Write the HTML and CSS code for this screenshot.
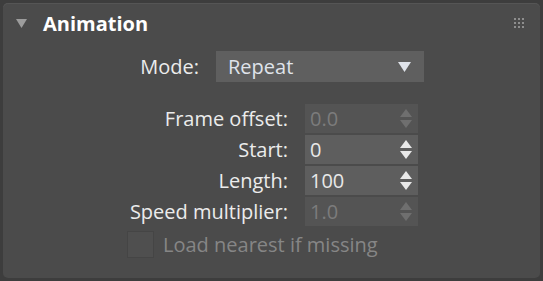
FILE: index.html
```html
<!DOCTYPE html>
<html lang="en">
<head>
  <meta charset="UTF-8" />
  <meta name="viewport" content="width=device-width, initial-scale=1.0"/>
  <title>Animation Rollout</title>
  <link rel="stylesheet" href="styles.css">
</head>
<body>
  <div class="rollout">
    <div class="rollout-header">
      <svg class="rollout-toggle" width="11" height="9" viewBox="0 0 11 9">
        <polygon points="0,0 11,0 5.5,9" fill="currentColor"></polygon>
      </svg>
      <h3>Animation</h3>
      <div class="grip">
        <span></span><span></span><span></span>
        <span></span><span></span><span></span>
        <span></span><span></span><span></span>
      </div>
    </div>

    <div class="mode-row">
      <label class="field-label">Mode:</label>
      <div class="dropdown">
        <span>Repeat</span>
        <svg width="13" height="10" viewBox="0 0 13 10">
          <polygon points="0,0 13,0 6.5,10" fill="currentColor"></polygon>
        </svg>
      </div>
    </div>

    <div class="spinner-grid">
      <label class="field-label">Frame offset:</label>
      <div class="spinner disabled">
        <span>0.0</span>
        <svg class="spin-arrows" width="12" height="20" viewBox="0 0 12 20">
          <polygon points="6,0 12,8 0,8" fill="currentColor"></polygon>
          <polygon points="0,11 12,11 6,19" fill="currentColor"></polygon>
        </svg>
      </div>

      <label class="field-label">Start:</label>
      <div class="spinner">
        <span>0</span>
        <svg class="spin-arrows" width="12" height="20" viewBox="0 0 12 20">
          <polygon points="6,0 12,8 0,8" fill="currentColor"></polygon>
          <polygon points="0,11 12,11 6,19" fill="currentColor"></polygon>
        </svg>
      </div>

      <label class="field-label">Length:</label>
      <div class="spinner">
        <span>100</span>
        <svg class="spin-arrows" width="12" height="20" viewBox="0 0 12 20">
          <polygon points="6,0 12,8 0,8" fill="currentColor"></polygon>
          <polygon points="0,11 12,11 6,19" fill="currentColor"></polygon>
        </svg>
      </div>

      <label class="field-label">Speed multiplier:</label>
      <div class="spinner disabled">
        <span>1.0</span>
        <svg class="spin-arrows" width="12" height="20" viewBox="0 0 12 20">
          <polygon points="6,0 12,8 0,8" fill="currentColor"></polygon>
          <polygon points="0,11 12,11 6,19" fill="currentColor"></polygon>
        </svg>
      </div>
    </div>

    <div class="check-row disabled">
      <span class="checkbox"></span>
      <span>Load nearest if missing</span>
    </div>
  </div>
</body>
</html>
```

FILE: styles.css
```css
body {
  margin: 0;
  background: #3d3d3d;
  font-family: "Open Sans", "Noto Sans", sans-serif;
}

.rollout {
  margin: 3px;
  height: 275px;
  box-sizing: border-box;
  background: #4b4b4b;
  border-radius: 5px;
  box-shadow: inset 0 1px 0 #555555;
}

.rollout-header {
  display: flex;
  align-items: center;
  height: 40px;
  padding: 0 14px 0 13px;
  color: #9c9c9c;
}

.rollout-toggle {
  margin-right: 16px;
}

.rollout-header h3 {
  flex: 1;
  margin: 0;
  font-size: 20px;
  font-weight: 700;
  color: #ffffff;
}

.grip {
  display: grid;
  grid-template-columns: repeat(3, 2px);
  gap: 2px;
  margin-right: 2px;
}

.grip span {
  width: 2px;
  height: 2px;
  background: #8e8e8e;
}

.field-label {
  text-align: right;
  font-size: 20px;
  color: #ececec;
}

.mode-row {
  display: grid;
  grid-template-columns: 196px 208px;
  column-gap: 17px;
  align-items: center;
  margin-top: 8px;
}

.dropdown {
  display: flex;
  align-items: center;
  justify-content: space-between;
  height: 31px;
  padding: 0 13px 0 12px;
  background: #5f5f5f;
  font-size: 20px;
  color: #dfe3ea;
}

.spinner-grid {
  display: grid;
  grid-template-columns: 285px 113px;
  grid-auto-rows: 29px;
  column-gap: 17px;
  row-gap: 2px;
  align-items: center;
  margin-top: 22px;
}

.spinner {
  display: flex;
  align-items: center;
  justify-content: space-between;
  height: 29px;
  padding: 0 6px 0 5px;
  background: #5e5e5e;
  font-size: 20px;
  color: #e8e8e8;
}

.spinner.disabled {
  background: #545454;
  color: #7c7c7c;
}

.spin-arrows {
  color: #e8e8e8;
}

.spinner.disabled .spin-arrows {
  color: #6f6f6f;
}

.check-row {
  display: flex;
  align-items: center;
  gap: 9px;
  margin-top: 5px;
  padding-left: 124px;
  font-size: 20px;
  color: #e6e6e6;
}

.check-row.disabled {
  color: #868686;
}

.checkbox {
  width: 25px;
  height: 25px;
  background: #4f4f4f;
  border: 1px solid #454545;
}
```
